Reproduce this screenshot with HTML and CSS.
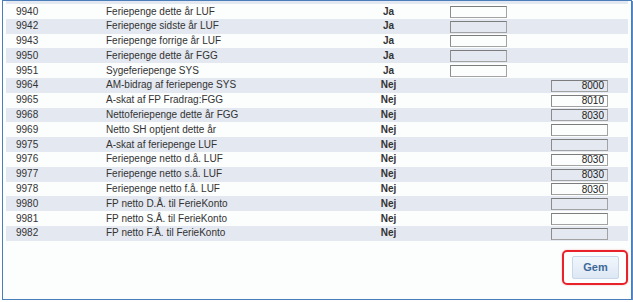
FILE: index.html
```html
<!DOCTYPE html>
<html lang="da">
<head>
  <meta charset="UTF-8">
  <title>Feriepenge - Lønarter</title>
  <link rel="stylesheet" href="styles.css">
</head>
<body>
  <div class="frame">
    <div class="rows">
      <div class="row row-cut"></div>
      <div class="row"><span class="code">9940</span><span class="desc">Feriepenge dette år LUF</span><span class="flag">Ja</span><span><input class="amount" type="text"></span><span></span></div>
      <div class="row"><span class="code">9942</span><span class="desc">Feriepenge sidste år LUF</span><span class="flag">Ja</span><span><input class="amount" type="text"></span><span></span></div>
      <div class="row"><span class="code">9943</span><span class="desc">Feriepenge forrige år LUF</span><span class="flag">Ja</span><span><input class="amount" type="text"></span><span></span></div>
      <div class="row"><span class="code">9950</span><span class="desc">Feriepenge dette år FGG</span><span class="flag">Ja</span><span><input class="amount" type="text"></span><span></span></div>
      <div class="row"><span class="code">9951</span><span class="desc">Sygeferiepenge SYS</span><span class="flag">Ja</span><span><input class="amount" type="text"></span><span></span></div>
      <div class="row"><span class="code">9964</span><span class="desc">AM-bidrag af feriepenge SYS</span><span class="flag">Nej</span><span></span><span><input class="amount" type="text" value="8000"></span></div>
      <div class="row"><span class="code">9965</span><span class="desc">A-skat af FP Fradrag:FGG</span><span class="flag">Nej</span><span></span><span><input class="amount" type="text" value="8010"></span></div>
      <div class="row"><span class="code">9968</span><span class="desc">Nettoferiepenge dette år FGG</span><span class="flag">Nej</span><span></span><span><input class="amount" type="text" value="8030"></span></div>
      <div class="row"><span class="code">9969</span><span class="desc">Netto SH optjent dette år</span><span class="flag">Nej</span><span></span><span><input class="amount" type="text"></span></div>
      <div class="row"><span class="code">9975</span><span class="desc">A-skat af feriepenge LUF</span><span class="flag">Nej</span><span></span><span><input class="amount" type="text"></span></div>
      <div class="row"><span class="code">9976</span><span class="desc">Feriepenge netto d.å. LUF</span><span class="flag">Nej</span><span></span><span><input class="amount" type="text" value="8030"></span></div>
      <div class="row"><span class="code">9977</span><span class="desc">Feriepenge netto s.å. LUF</span><span class="flag">Nej</span><span></span><span><input class="amount" type="text" value="8030"></span></div>
      <div class="row"><span class="code">9978</span><span class="desc">Feriepenge netto f.å. LUF</span><span class="flag">Nej</span><span></span><span><input class="amount" type="text" value="8030"></span></div>
      <div class="row"><span class="code">9980</span><span class="desc">FP netto D.Å. til FerieKonto</span><span class="flag">Nej</span><span></span><span><input class="amount" type="text"></span></div>
      <div class="row"><span class="code">9981</span><span class="desc">FP netto S.Å. til FerieKonto</span><span class="flag">Nej</span><span></span><span><input class="amount" type="text"></span></div>
      <div class="row"><span class="code">9982</span><span class="desc">FP netto F.Å. til FerieKonto</span><span class="flag">Nej</span><span></span><span><input class="amount" type="text"></span></div>
    </div>

    <div class="actions">
      <div class="highlight">
        <button class="save-btn" type="button">Gem</button>
      </div>
    </div>
  </div>
</body>
</html>
```

FILE: styles.css
```css
/* General */
body {
  margin: 0;
  font-family: "Liberation Sans", Arial, sans-serif;
  font-size: 10px;
  color: #333;
  background-color: #fff;
}

/* Window frame */
.frame {
  box-sizing: border-box;
  width: 630px;
  height: 300px;
  margin-left: 2px;
  border: 1px solid #4a7ebb;
  box-shadow: 1px 1px 0 #5b8bc4;
  background-color: #fcfdfd;
  padding: 0 3px 0 3px;
  overflow: hidden;
}

/* Rows (list is scrolled a little) */
.row {
  display: grid;
  grid-template-columns: 100px 248px 69px 128px 1fr;
  align-items: center;
  height: 14.8px;
  box-sizing: border-box;
  padding-top: 1px;
}

.row:nth-child(odd) {
  background-color: #e4e8f0;
}

.row-cut {
  height: 3px;
}

.row span {
  line-height: 12.8px;
  white-space: nowrap;
}

.code {
  padding-left: 10px;
}

.flag {
  font-weight: bold;
  text-align: center;
}

.row span:nth-child(4) .amount {
  margin-left: 27px;
}

.amount {
  display: block;
  box-sizing: border-box;
  width: 57px;
  height: 12px;
  margin: 0;
  padding: 0 3px 0 2px;
  border: 1px solid #a3a3a3;
  border-top-color: #7d7d7d;
  border-left-color: #8c8c8c;
  background-color: transparent;
  font-family: "Liberation Sans", Arial, sans-serif;
  font-size: 10px;
  color: #222;
  text-align: right;
  outline: none;
}

/* Save button */
.actions {
  display: flex;
  justify-content: flex-end;
  padding-top: 9px;
}

.highlight {
  border: 2px solid #e8222a;
  border-radius: 5px;
  padding: 4px 7px 4px 8px;
  box-shadow: 0 0 2px rgba(232, 34, 42, 0.35);
}

.save-btn {
  display: block;
  width: 47px;
  height: 23px;
  padding: 0;
  border: 1px solid #c8d7ea;
  border-radius: 2px;
  background: linear-gradient(#f1f6fc, #dde8f5);
  font-family: "Liberation Sans", Arial, sans-serif;
  font-size: 11px;
  font-weight: bold;
  color: #3e6898;
  cursor: pointer;
}
```
